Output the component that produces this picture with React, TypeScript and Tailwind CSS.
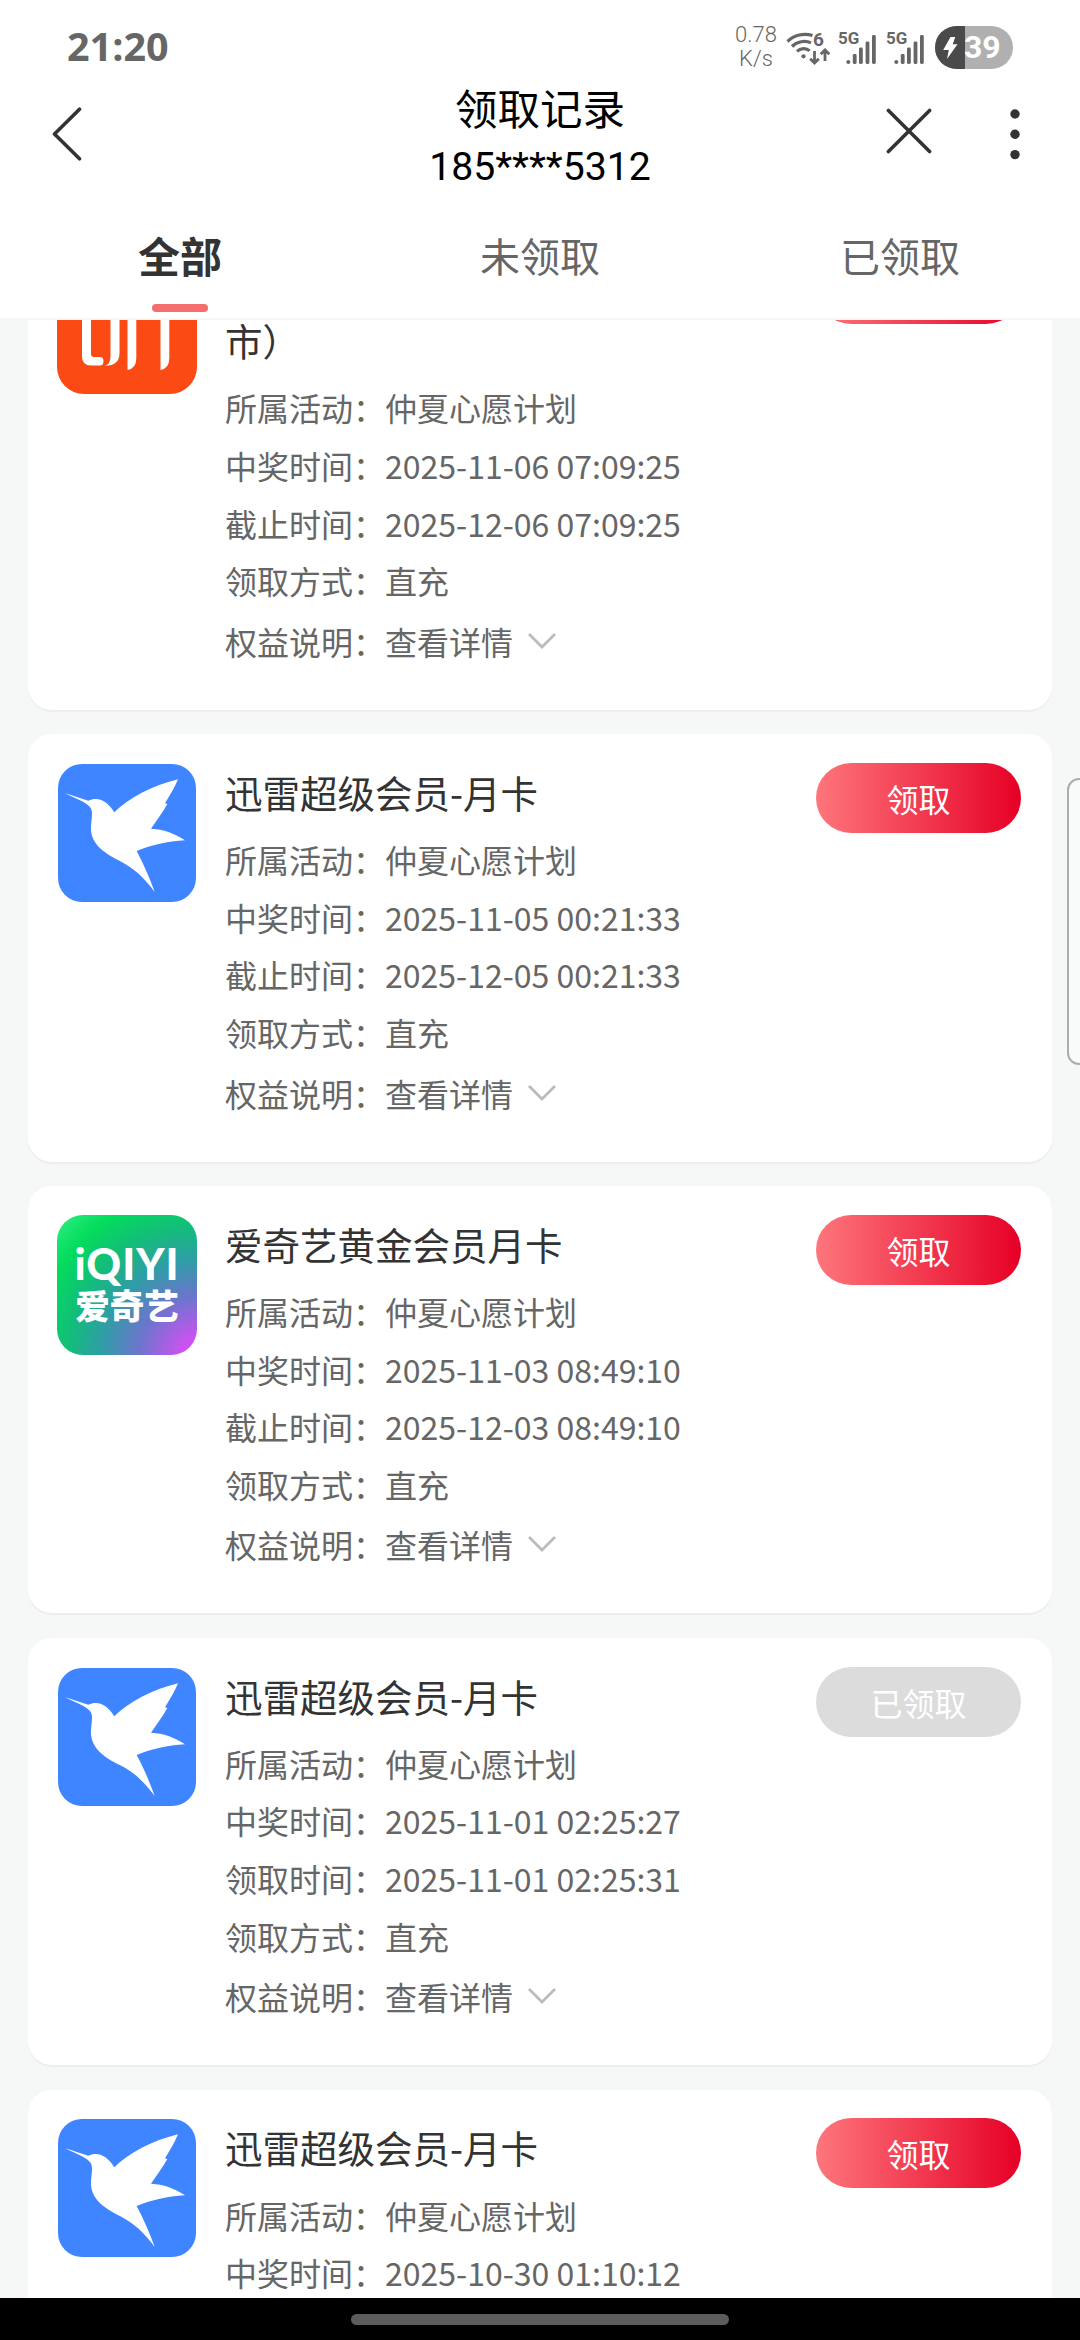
import type { ReactNode } from 'react';
import { clsx } from 'clsx';

interface RewardRecord {
  id: number;
  logo: 'listen' | 'xunlei' | 'iqiyi';
  title: ReactNode;
  wonAt: string;
  timeLabel: string;
  time: string;
  claimed: boolean;
}

const TABS = ['全部', '未领取', '已领取'];

const RECORDS: RewardRecord[] = [
  {
    id: 1,
    logo: 'listen',
    title: (
      <>
        <br />
        市）
      </>
    ),
    wonAt: '2025-11-06 07:09:25',
    timeLabel: '截止时间',
    time: '2025-12-06 07:09:25',
    claimed: false,
  },
  {
    id: 2,
    logo: 'xunlei',
    title: '迅雷超级会员-月卡',
    wonAt: '2025-11-05 00:21:33',
    timeLabel: '截止时间',
    time: '2025-12-05 00:21:33',
    claimed: false,
  },
  {
    id: 3,
    logo: 'iqiyi',
    title: '爱奇艺黄金会员月卡',
    wonAt: '2025-11-03 08:49:10',
    timeLabel: '截止时间',
    time: '2025-12-03 08:49:10',
    claimed: false,
  },
  {
    id: 4,
    logo: 'xunlei',
    title: '迅雷超级会员-月卡',
    wonAt: '2025-11-01 02:25:27',
    timeLabel: '领取时间',
    time: '2025-11-01 02:25:31',
    claimed: true,
  },
  {
    id: 5,
    logo: 'xunlei',
    title: '迅雷超级会员-月卡',
    wonAt: '2025-10-30 01:10:12',
    timeLabel: '截止时间',
    time: '2025-11-30 01:10:12',
    claimed: false,
  },
];

function WifiIcon() {
  return (
    <svg viewBox="0 0 45 34" className="w-[45px] h-[34px] overflow-visible" fill="none" stroke="#666" strokeWidth="3.2">
      <path d="M1.5 10.5C8 4 18 1.8 26.5 4.6" />
      <path d="M6 15.5c5-5 13-6.6 19-3.6" />
      <path d="M11 20.4c3.4-3.4 9-4 12.6-.6" />
      <circle cx="17.5" cy="25.3" r="2.1" fill="#666" stroke="none" />
      <path d="M28.5 20v12M24.2 27.8l4.3 4.2 4.3-4.2M39 30V19M34.7 23.2L39 19l4.3 4.2" strokeWidth="2.8" />
      <text x="27" y="14.6" fill="#666" stroke="none" className="font-['Roboto'] text-[19px] font-bold">
        6
      </text>
    </svg>
  );
}

function SignalIcon() {
  return (
    <svg viewBox="0 0 40 34" className="w-[40px] h-[34px] overflow-visible" fill="#666">
      <text x="0" y="14" className="font-['Roboto'] text-[17px] font-bold">
        5G
      </text>
      <circle cx="10.3" cy="32" r="2" />
      <rect x="14.8" y="24" width="3.8" height="10" rx="1.4" />
      <rect x="21" y="17.5" width="3.8" height="16.5" rx="1.4" />
      <rect x="27.6" y="11.5" width="3.8" height="22.5" rx="1.4" />
      <rect x="34" y="5" width="3.8" height="29" rx="1.4" />
    </svg>
  );
}

function Battery() {
  return (
    <div className="flex w-[78px] h-[43px] rounded-full overflow-hidden bg-[#b0b0b0]">
      <div className="flex items-center justify-center w-[30px] bg-[#4a4a4a]">
        <svg viewBox="0 0 16 24" className="w-[16px] h-[24px]" fill="#fff">
          <path d="M8.5 1h4.8l-2.6 7.2h4.8L5 23l1.8-9H1.2z" />
        </svg>
      </div>
      <span className="font-['Roboto'] text-[32px] leading-[42px] font-bold text-white -ml-px">39</span>
    </div>
  );
}

function StatusBar() {
  return (
    <div className="flex items-start justify-between h-[80px] pl-[67px] pr-[67px] pt-[26px] text-[#666]">
      <div className="font-['Open_Sans'] text-[39.5px] leading-[44px] font-bold -mt-[2px]">21:20</div>
      <div className="flex items-start">
        <div className="w-[44px] font-['Roboto'] text-[22px] leading-[24px] font-light text-center -mt-[3px]">
          0.78
          <br />
          K/s
        </div>
        <div className="ml-[8px] mt-[5px]">
          <WifiIcon />
        </div>
        <div className="ml-[7px] mt-[4px]">
          <SignalIcon />
        </div>
        <div className="ml-[8px] mt-[4px]">
          <SignalIcon />
        </div>
        <div className="ml-[9px]">
          <Battery />
        </div>
      </div>
    </div>
  );
}

function TitleBar() {
  return (
    <div className="grid grid-cols-[1fr_auto_1fr] h-[116px]">
      <div className="pl-[51px] pt-[27px]">
        <svg viewBox="0 0 34 54" className="w-[34px] h-[54px]" fill="none" stroke="#333" strokeWidth="3.6" strokeLinecap="round" strokeLinejoin="round">
          <path d="M28.5 2.2L3.5 27l25 24.8" />
        </svg>
      </div>
      <div className="text-center text-black">
        <h1 className="text-[42.5px] leading-[60px] -mt-[3px]">领取记录</h1>
        <p className="font-['Roboto'] text-[39.2px] leading-[60px]">185****5312</p>
      </div>
      <div className="flex justify-end pr-[60px] pt-[27px]">
        <svg viewBox="0 0 46 46" className="w-[46px] h-[46px] mt-[1px]" fill="none" stroke="#333" strokeWidth="3.6" strokeLinecap="round">
          <path d="M2.4 2.4l41.2 41.2M43.6 2.4L2.4 43.6" />
        </svg>
        <svg viewBox="0 0 10 54" className="w-[10px] h-[54px] ml-[78px]" fill="#333">
          <circle cx="5" cy="7" r="4.7" />
          <circle cx="5" cy="27.3" r="4.7" />
          <circle cx="5" cy="47.6" r="4.7" />
        </svg>
      </div>
    </div>
  );
}

function Tabs() {
  return (
    <div className="grid grid-cols-3 h-[122px] pt-[29px] text-center">
      {TABS.map((tab, i) => (
        <div key={tab} className="flex flex-col items-center">
          <span className={clsx('leading-[60px]', i === 0 ? 'text-[42px] font-bold text-[#333]' : 'text-[40px] text-[#666]')}>
            {tab}
          </span>
          {i === 0 && <span className="w-[56px] h-[8px] mt-[19px] rounded-full bg-[#f46e70]" />}
        </div>
      ))}
    </div>
  );
}

function ListenLogo() {
  return (
    <svg viewBox="0 0 140 140" className="w-[140px] h-[140px]">
      <rect width="140" height="140" rx="27" fill="#fc4a14" />
      <g fill="#fff">
        <path d="M25 50h9v50q0 3 3 3h6q3.5 0 3.5 4.2t-3.5 4.3H34q-9 0-9-9z" />
        <path d="M53.5 50h9v49q0 12.8-14.5 12.8 5.5-2 5.5-9z" />
        <path d="M70.5 50h8.8v54q0 10.5-8.8 12z" />
        <path d="M103.5 50h8.8v54q0 10.5-8.8 12z" />
      </g>
    </svg>
  );
}

function XunleiLogo() {
  return (
    <svg viewBox="0 0 420 420" className="w-[140px] h-[140px]">
      <rect x="3" y="3" width="414" height="414" rx="72" fill="#3f85ff" />
      <path
        fill="#fff"
        d="M25 91L94 113C122 100 150 112 172 148C215 105 285 68 363 49C352 76 338 97 324 121L331 123C318 148 300 170 282 197C320 199 350 210 384 232C330 235 285 246 239 264C260 303 278 345 293 387C262 345 230 315 190 295C135 268 99 238 102 190C104 165 108 146 101 135C91 119 55 107 25 91Z"
      />
    </svg>
  );
}

function IqiyiLogo() {
  return (
    <div className="flex flex-col items-center w-[140px] h-[140px] pt-[28px] rounded-[26px] bg-[radial-gradient(circle_at_100%_100%,#d24bf5_0%,#cb52f0_8%,#6a76cc_30%,#2f9da6_48%,#12bf78_66%,#04dc5c_82%,#2fee83_100%)] text-white">
      <span className="font-['Lato'] text-[43px] leading-[42px] font-black tracking-[1px]">iQIYI</span>
      <span className="text-[34.5px] leading-[36px] font-black mt-px">爱奇艺</span>
    </div>
  );
}

const LOGOS = {
  listen: ListenLogo,
  xunlei: XunleiLogo,
  iqiyi: IqiyiLogo,
};

function Row({ label, children }: { label: string; children: ReactNode }) {
  return (
    <div className="flex items-center h-[57.6px]">
      <span>{label}：</span>
      {children}
    </div>
  );
}

function RecordCard({ record }: { record: RewardRecord }) {
  const Logo = LOGOS[record.logo];

  return (
    <li className="flex items-start px-[29px] pt-[28.5px] pb-[40.2px] rounded-[24px] bg-white shadow-[0_2px_1px_#ededed]">
      <Logo />
      <div className="flex-1 ml-[28px] text-[32px] text-[#666]">
        <h2 className="text-[37.5px] leading-[57px] text-[#333]">{record.title}</h2>
        <div className="mt-[10.5px]">
          <Row label="所属活动">仲夏心愿计划</Row>
          <Row label="中奖时间">{record.wonAt}</Row>
          <Row label={record.timeLabel}>{record.time}</Row>
          <Row label="领取方式">直充</Row>
        </div>
        <div className="mt-[3px]">
          <Row label="权益说明">
            查看详情
            <svg viewBox="0 0 28 16" className="w-[28px] h-[16px] ml-[15px]" fill="none" stroke="#bbb" strokeWidth="2.8">
              <path d="M1 1l13 13L27 1" />
            </svg>
          </Row>
        </div>
      </div>
      <button
        className={clsx(
          'w-[205px] h-[70px] mr-[2px] rounded-full text-[32px] leading-[70px] text-white',
          record.claimed ? 'bg-[#dcdcdc]' : 'bg-linear-to-r/srgb from-[#fe767c] to-[#e60026]',
        )}
      >
        {record.claimed ? '已领取' : '领取'}
      </button>
    </li>
  );
}

export default function App() {
  return (
    <div className="relative flex flex-col w-[1080px] h-[2340px] overflow-hidden bg-[#f6f8f8] font-['Noto_Sans_CJK_SC',sans-serif]">
      <header className="relative z-10 bg-white border-b-2 border-[#f6f7f7]">
        <StatusBar />
        <TitleBar />
        <Tabs />
      </header>

      {/* list is scrolled part of the way into the first card */}
      <main className="flex-1 min-h-0 overflow-hidden">
        <ul className="flex flex-col gap-[24.67px] px-[28px] -mt-[94.4px]">
          {RECORDS.map((record) => (
            <RecordCard key={record.id} record={record} />
          ))}
        </ul>
      </main>

      {/* system edge panel handle */}
      <div className="absolute top-[778px] -right-[12px] w-[25px] h-[287px] rounded-[12px] border-2 border-[#adadad] bg-[#f9fafa]" />

      <footer className="flex justify-center h-[42px] pt-[16px] bg-black">
        <div className="w-[378px] h-[11px] rounded-full bg-[#5c5c5c]" />
      </footer>
    </div>
  );
}
